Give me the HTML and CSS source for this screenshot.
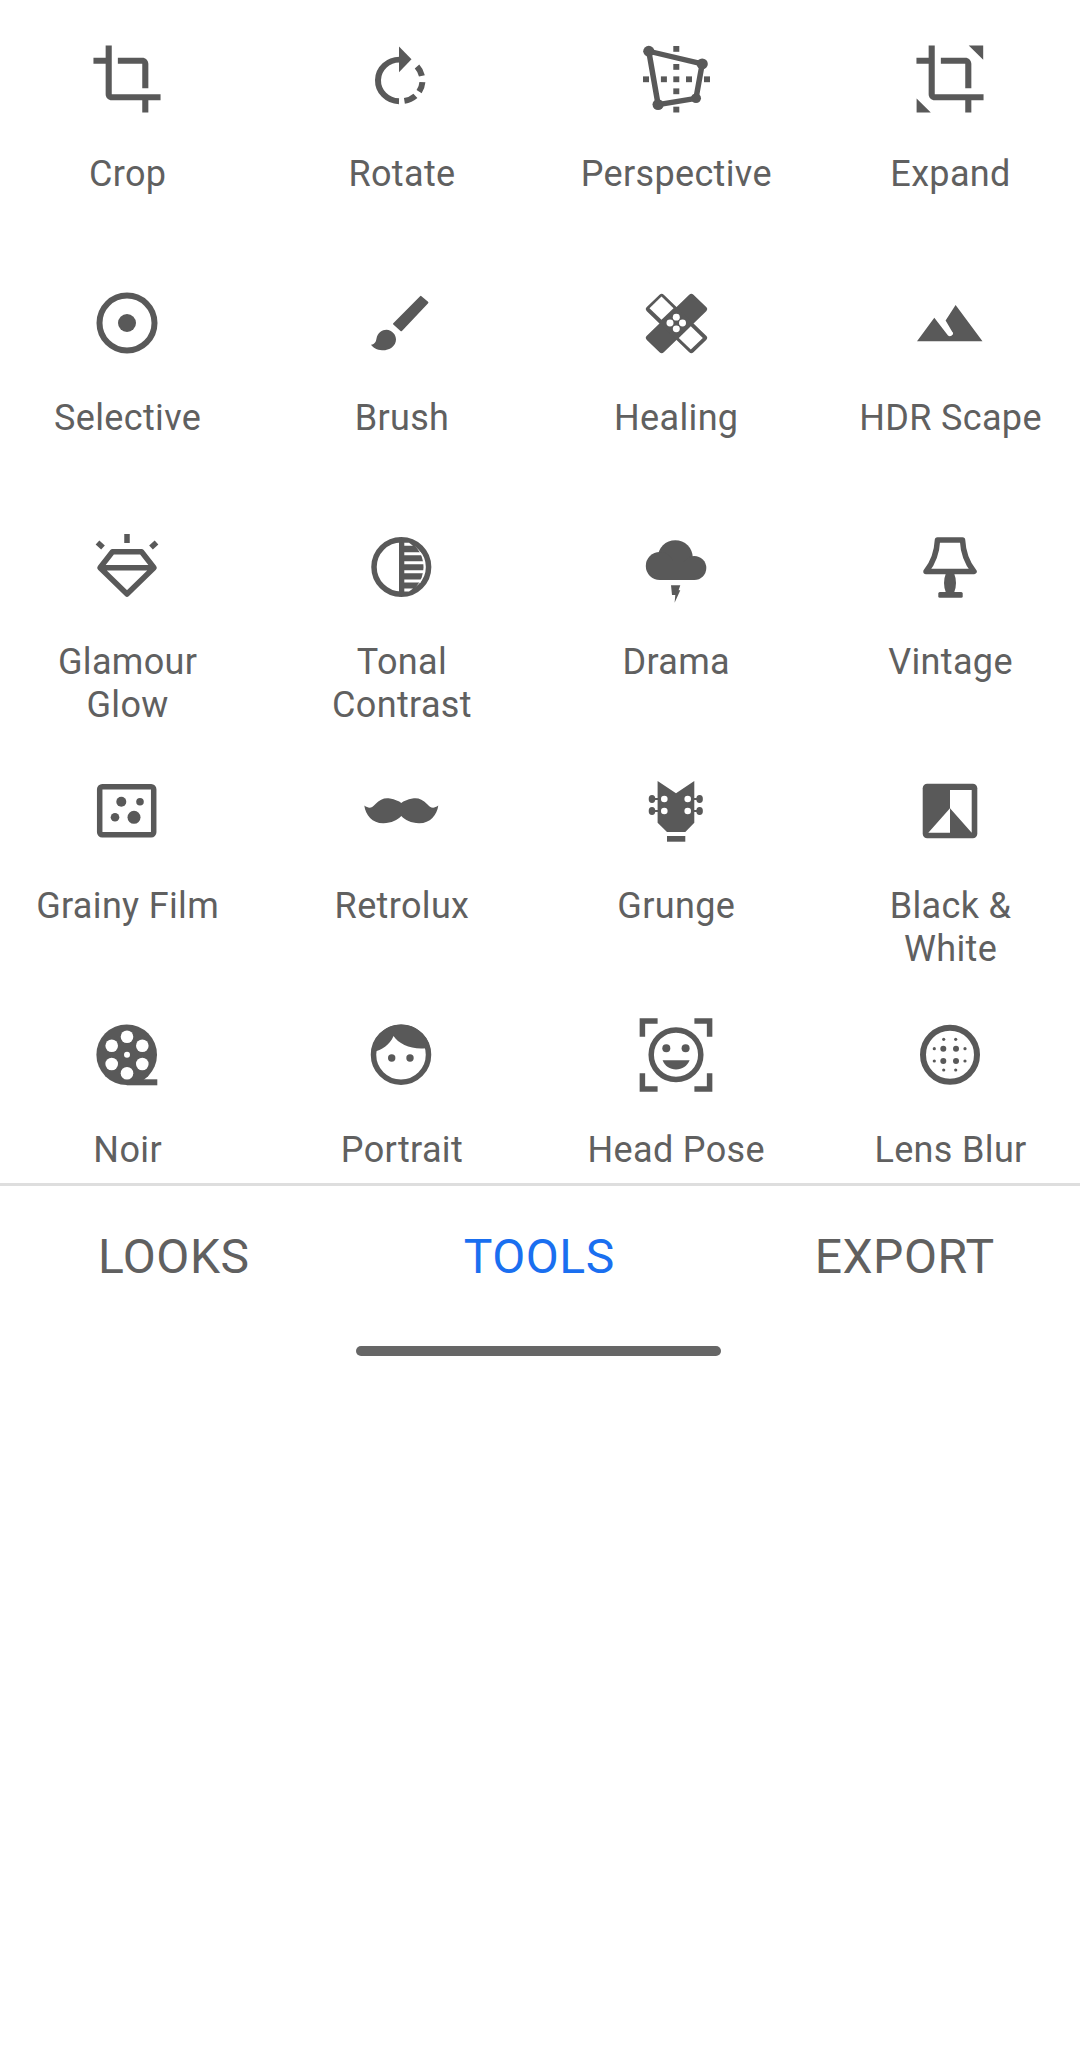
FILE: index.html
```html
<!DOCTYPE html>
<html>
<head>
    <title>Tools</title>
    <link rel="stylesheet" href="styles.css">
</head>
<body>
    <div class="tools">
        <div class="tool">
            <svg class="icon" viewBox="0 0 80 80"><path transform="translate(3.4 3.4) scale(3.05)" d="M17 15h2V7c0-1.1-.9-2-2-2H9v2h8v8zM7 17V1H5v4H1v2h4v10c0 1.1.9 2 2 2h10v4h2v-4h4v-2H7z"/></svg>
            <div class="label">Crop</div>
        </div>
        <div class="tool">
            <svg class="icon squash" viewBox="0 0 80 80">
                <path d="M38 6.5L50.5 19.5L38 33Z"/>
                <path class="line thick" d="M39 20A21.5 21.5 0 0 0 38 63M56 27.1A21.5 21.5 0 0 1 60.9 36.7M61.4 43.2A21.5 21.5 0 0 1 58.1 53.1M54.4 57.5A21.5 21.5 0 0 1 43.4 62.7"/>
            </svg>
            <div class="label">Rotate</div>
        </div>
        <div class="tool">
            <svg class="icon squash" viewBox="0 0 80 80">
                <path class="line" d="M12.8 11.3L66.2 24.4L60 59.9L22.1 66.4Z"/>
                <circle cx="12.8" cy="11.3" r="5.6"/><circle cx="66.2" cy="24.4" r="5.6"/><circle cx="60" cy="59.9" r="5"/><circle cx="22.1" cy="66.4" r="5.6"/>
                <rect x="37.3" y="5.9" width="6" height="6"/><rect x="37.3" y="24.5" width="6" height="6"/><rect x="37.3" y="49.7" width="6" height="6"/><rect x="37.3" y="68.6" width="6" height="6"/>
                <rect x="7" y="37.3" width="6" height="6"/><rect x="24.9" y="37.3" width="6" height="6"/><rect x="37.3" y="37.3" width="6" height="6"/><rect x="50" y="37.3" width="6" height="6"/><rect x="68" y="37.3" width="6" height="6"/>
            </svg>
            <div class="label">Perspective</div>
        </div>
        <div class="tool">
            <svg class="icon" viewBox="0 0 80 80">
                <path transform="translate(3.4 3.4) scale(3.05)" d="M17 15h2V7c0-1.1-.9-2-2-2H9v2h8v8zM7 17V1H5v4H1v2h4v10c0 1.1.9 2 2 2h10v4h2v-4h4v-2H7z"/>
                <path d="M58.7 6.4H73.2V20.7ZM6.6 59.6L20.8 73.6H6.6Z"/>
            </svg>
            <div class="label">Expand</div>
        </div>

        <div class="tool">
            <svg class="icon" viewBox="0 0 80 80">
                <circle class="line thick" cx="40" cy="40" r="27.5"/><circle cx="40" cy="40" r="9"/>
            </svg>
            <div class="label">Selective</div>
        </div>
        <div class="tool">
            <svg class="icon squash" viewBox="0 0 80 80">
                <path class="round" d="M59.8 13L66.4 18.8L40.2 47.5L33 40.9Z"/>
                <path d="M10 62.5C14 62 15 59 15.5 56C16.5 50 21 47 25.5 47C31 47.5 35 52 35 57C35 64 28 68.5 21 68.2C16 68 12 65.5 10 62.5Z"/>
            </svg>
            <div class="label">Brush</div>
        </div>
        <div class="tool">
            <svg class="icon squash" viewBox="0 0 80 80">
                <rect x="7.5" y="28.5" width="66" height="24" rx="3" transform="rotate(-45 40.5 40.5)"/>
                <rect x="7.5" y="28.5" width="66" height="24" rx="3" transform="rotate(45 40.5 40.5)"/>
                <rect class="hole" x="17" y="16.2" width="17" height="17" transform="rotate(45 25.5 24.7)"/>
                <rect class="hole" x="46.3" y="46.9" width="17" height="17" transform="rotate(45 54.8 55.4)"/>
                <circle class="hole" cx="40.3" cy="34" r="3.5"/><circle class="hole" cx="34" cy="40" r="3.5"/><circle class="hole" cx="46.5" cy="40" r="3.5"/><circle class="hole" cx="40.3" cy="46" r="3.5"/>
            </svg>
            <div class="label">Healing</div>
        </div>
        <div class="tool">
            <svg class="icon squash" viewBox="0 0 80 80">
                <path d="M7 58.8L24.3 34.7L38 53Q40.5 55 43 51.5Q43.5 50 42.2 49L35.6 37.5L45.6 21.3L72.5 58.8Z"/>
            </svg>
            <div class="label">HDR Scape</div>
        </div>

        <div class="tool">
            <svg class="icon" viewBox="0 0 80 80">
                <path class="line" d="M25.5 24.8H54.5L67 40.7L40 67L13 40.7ZM13 40.7H67"/>
                <path class="line" d="M40 7V16M10.5 15.5L16 20.5M69.5 15.5L64 20.5"/>
            </svg>
            <div class="label">Glamour<br>Glow</div>
        </div>
        <div class="tool">
            <svg class="icon" viewBox="0 0 80 80">
                <path d="M38 10.5A30 30 0 0 1 38 69.5Z"/>
                <circle class="line" cx="40.3" cy="40" r="27.3"/>
                <path class="hole" d="M43.3 15.8H48L52 18.8H43.3ZM43.3 25.2H60V28.2H43.3ZM43.3 34.2H64V37.2H43.3ZM43.3 43.2H64V46.2H43.3ZM43.3 52.5H60V55.5H43.3ZM43.3 61.5H52L48 64.5H43.3Z"/>
            </svg>
            <div class="label">Tonal<br>Contrast</div>
        </div>
        <div class="tool">
            <svg class="icon" viewBox="0 0 80 80">
                <circle cx="39.3" cy="30.7" r="17.5"/><circle cx="23.8" cy="39" r="14"/><circle cx="58.3" cy="41" r="12"/>
                <rect x="24" y="35" width="34" height="18"/>
                <path d="M35 58.3H44.3L42.6 63.3H44.3L38.6 75.7L39.3 68H36Z"/>
            </svg>
            <div class="label">Drama</div>
        </div>
        <div class="tool">
            <svg class="icon" viewBox="0 0 80 80">
                <path class="line" d="M27.5 13H52.5Q53.5 32 64 44.5H16Q26.5 32 27.5 13Z"/>
                <path d="M36 46Q32 56 36 66H44Q48 56 44 46Z"/>
                <rect x="28.3" y="65" width="24.4" height="5.8" rx="1.5"/>
            </svg>
            <div class="label">Vintage</div>
        </div>

        <div class="tool">
            <svg class="icon" viewBox="0 0 80 80">
                <rect class="line" x="12.7" y="15.7" width="54" height="48" rx="2.5"/>
                <circle cx="34.3" cy="30.7" r="5"/><circle cx="53" cy="30.7" r="3.8"/><circle cx="28" cy="46.3" r="4.3"/><circle cx="47" cy="46.3" r="6.5"/>
            </svg>
            <div class="label">Grainy Film</div>
        </div>
        <div class="tool">
            <svg class="icon" viewBox="0 0 80 80">
                <path d="M3.3 34.5C8 38 11 37 14.5 33C19 28 24 26.5 29 27.5C34 28.5 38 30 40.3 32C42.5 30 46.5 28.5 51.5 27.5C56.5 26.5 61.5 28 66 33C69.5 37 72.5 38 77.3 34.5C76 44 69 52.5 58 52.3C50 52 44 49 40.3 45C36.5 49 30.5 52 22.5 52.3C11.5 52.5 4.5 44 3.3 34.5Z"/>
            </svg>
            <div class="label">Retrolux</div>
        </div>
        <div class="tool">
            <svg class="icon" viewBox="0 0 80 80">
                <path d="M21.6 10L40 22.3L58.3 10V51.7L49.3 61H31L21.6 51.7Z"/>
                <rect x="31" y="65" width="18.3" height="5.7"/>
                <rect x="15" y="27" width="50" height="2"/><rect x="15" y="39" width="50" height="2"/>
                <ellipse cx="16" cy="28" rx="3.3" ry="4"/><ellipse cx="16" cy="40" rx="3.3" ry="4"/><ellipse cx="63.6" cy="28" rx="3.3" ry="4"/><ellipse cx="63.6" cy="40" rx="3.3" ry="4"/>
                <circle class="hole" cx="28.3" cy="28" r="3.3"/><circle class="hole" cx="28.3" cy="40" r="3.3"/><circle class="hole" cx="51.7" cy="28" r="3.3"/><circle class="hole" cx="51.7" cy="40" r="3.3"/>
            </svg>
            <div class="label">Grunge</div>
        </div>
        <div class="tool">
            <svg class="icon" viewBox="0 0 80 80">
                <rect x="12.7" y="12.7" width="54.6" height="54.6" rx="4.5"/>
                <path class="hole" d="M40 19H61.7V61.7L40 37.3ZM40 37.3V61.7H18.3Z"/>
            </svg>
            <div class="label">Black &amp;<br>White</div>
        </div>

        <div class="tool">
            <svg class="icon" viewBox="0 0 80 80">
                <circle cx="39.7" cy="39.7" r="30.3"/>
                <rect x="39.7" y="64.3" width="30.6" height="6"/>
                <circle class="hole" cx="40" cy="21.7" r="6.3"/><circle class="hole" cx="24.7" cy="30.7" r="6.3"/><circle class="hole" cx="55.3" cy="30.7" r="6.3"/><circle class="hole" cx="24.7" cy="49" r="6.3"/><circle class="hole" cx="55.3" cy="49" r="6.3"/><circle class="hole" cx="40" cy="58.3" r="6.3"/><circle class="hole" cx="40" cy="39.7" r="3"/>
            </svg>
            <div class="label">Noir</div>
        </div>
        <div class="tool">
            <svg class="icon" viewBox="0 0 80 80">
                <circle class="line" cx="40" cy="39.7" r="27.5"/>
                <path d="M13 37C20 35 29 30 32.5 21C37 28 48 33.5 60 33.5C63 33.5 66 33.5 68.8 32A29.5 29.5 0 0 0 11.5 32Z"/>
                <circle cx="30.7" cy="43" r="3.7"/><circle cx="49" cy="43" r="3.7"/>
            </svg>
            <div class="label">Portrait</div>
        </div>
        <div class="tool">
            <svg class="icon" viewBox="0 0 80 80">
                <path class="line miter" d="M21.6 6.1H6.4V21.7M58.4 6.1H73.6V21.7M21.6 73.9H6.4V58.3M58.4 73.9H73.6V58.3"/>
                <circle class="line" cx="40" cy="39.7" r="24.8"/>
                <circle cx="30.3" cy="33.3" r="4"/><circle cx="49.6" cy="33.3" r="4"/>
                <path d="M26.6 45.3H53.6C51.5 51 46 54.5 40 54.5C34 54.5 28.5 51 26.6 45.3Z"/>
            </svg>
            <div class="label">Head Pose</div>
        </div>
        <div class="tool">
            <svg class="icon" viewBox="0 0 80 80">
                <circle class="line thick" cx="40" cy="39.7" r="27"/>
                <circle cx="33.3" cy="33.7" r="3"/><circle cx="46" cy="33.7" r="3"/><circle cx="33.3" cy="46" r="3"/><circle cx="46" cy="46" r="3"/>
                <circle cx="33.7" cy="24.3" r="1.6"/><circle cx="45.7" cy="24.3" r="1.6"/><circle cx="24.3" cy="33.7" r="1.6"/><circle cx="55" cy="33.7" r="1.6"/><circle cx="24.3" cy="46" r="1.6"/><circle cx="55" cy="46" r="1.6"/><circle cx="33.7" cy="55" r="1.6"/><circle cx="45.7" cy="55" r="1.6"/>
            </svg>
            <div class="label">Lens Blur</div>
        </div>
    </div>

    <div class="tabs">
        <div class="tab">LOOKS</div>
        <div class="tab active">TOOLS</div>
        <div class="tab">EXPORT</div>
    </div>
    <div class="tab-bar"></div>
</body>
</html>
```

FILE: styles.css
```css
html, body { margin: 0; padding: 0; background-color: #ffffff; overflow: hidden; }
body { width: 1080px; height: 2064px; font-family: Roboto, "Liberation Sans", sans-serif; color: #606060; }

.tools { display: grid; grid-template-columns: repeat(4, 274.3px); grid-auto-rows: 244px; height: 1183px; margin-left: -10px; overflow: hidden; }
.tool { display: flex; flex-direction: column; align-items: center; }
.icon { display: block; width: 80px; height: 80px; margin-top: 38.5px; flex: none; fill: #595959; }
.icon.squash { transform: scaleY(.968); }
.icon .line { fill: none; stroke: #595959; stroke-width: 5.5; stroke-linejoin: round; }
.icon .thick { stroke-width: 6; }
.icon .miter { stroke-linejoin: miter; }
.icon .round { stroke: #595959; stroke-width: 2; stroke-linejoin: round; }
.icon .hole { fill: #ffffff; }
.label { margin-top: 34px; padding-left: 1px; font-size: 36px; line-height: 43px; letter-spacing: .35px; text-align: center; white-space: nowrap; }

.tabs { display: grid; grid-template-columns: repeat(3, 365.5px); margin-left: -9px; padding-top: 43px; border-top: 3px solid #dedede; }
.tab { font-size: 48px; line-height: 56px; letter-spacing: .5px; text-align: center; }
.tab.active { color: #1a6ff0; }
.tab-bar { width: 365px; height: 10px; margin: 61px 0 0 356px; border-radius: 5px; background-color: #666666; }
```
